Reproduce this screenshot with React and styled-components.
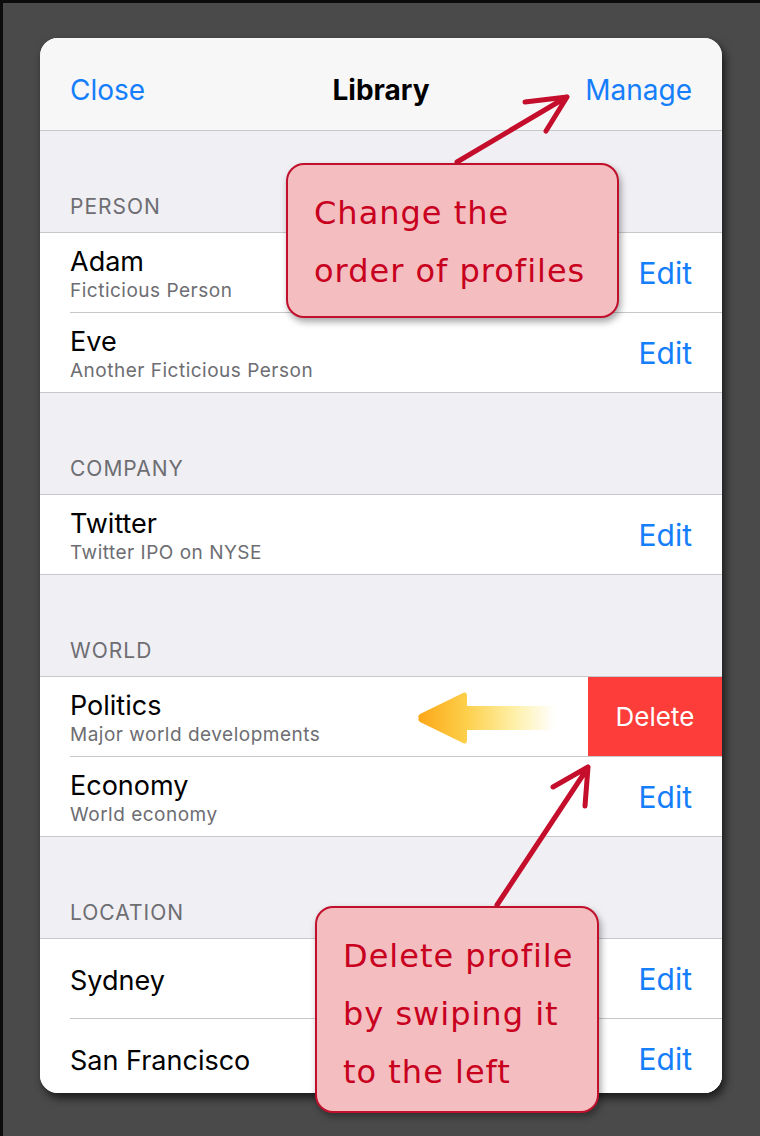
import React from 'react';
import styled, { createGlobalStyle } from 'styled-components';

const GlobalStyle = createGlobalStyle`
	html, body {
		margin: 0;
		padding: 0;
		background: #4a4a4a;
	}
	* {
		box-sizing: border-box;
	}
`;

const sections = [
	{
		title: 'PERSON',
		items: [
			{ name: 'Adam', sub: 'Ficticious Person' },
			{ name: 'Eve', sub: 'Another Ficticious Person' },
		],
	},
	{
		title: 'COMPANY',
		items: [{ name: 'Twitter', sub: 'Twitter IPO on NYSE' }],
	},
	{
		title: 'WORLD',
		items: [
			{ name: 'Politics', sub: 'Major world developments', swiped: true },
			{ name: 'Economy', sub: 'World economy' },
		],
	},
	{
		title: 'LOCATION',
		items: [{ name: 'Sydney' }, { name: 'San Francisco' }],
	},
];

export default function App() {
	return (
		<Page>
			<GlobalStyle />
			<Card>
				<NavBar>
					<NavButton>Close</NavButton>
					<NavTitle>Library</NavTitle>
					<NavButton align="right">Manage</NavButton>
				</NavBar>
				{sections.map((section) => (
					<section key={section.title}>
						<SectionHeader>{section.title}</SectionHeader>
						<Group>
							{section.items.map((item) => (
								<Row key={item.name}>
									<TextBlock>
										<Title>{item.name}</Title>
										{item.sub && <Subtitle>{item.sub}</Subtitle>}
									</TextBlock>
									{item.swiped ? (
										<>
											<SwipeArrow />
											<DeleteButton>Delete</DeleteButton>
										</>
									) : (
										<EditButton>Edit</EditButton>
									)}
								</Row>
							))}
						</Group>
					</section>
				))}
			</Card>

			{/* annotations drawn over the screenshot */}
			<Arrows viewBox="0 0 760 1136">
				<g stroke="#c40e2c" strokeWidth="5" strokeLinecap="round" fill="none">
					<path d="M457 162 L565 98 M567 97 L525 102 M567 97 L546 131" />
					<path d="M497 905 L587 769 M588 767 L553 787 M588 767 L585 806" />
				</g>
			</Arrows>
			<Callout top={163} left={286} width={333} height={155}>
				Change the
				<br />
				order of profiles
			</Callout>
			<Callout top={906} left={315} width={284} height={207}>
				Delete profile
				<br />
				by swiping it
				<br />
				to the left
			</Callout>
		</Page>
	);
}

function SwipeArrow() {
	return (
		<ArrowSvg width="138" height="52" viewBox="0 0 138 52">
			<defs>
				<linearGradient id="swipe" x1="0" y1="0" x2="1" y2="0">
					<stop offset="0" stopColor="#fba718" />
					<stop offset="0.35" stopColor="#fdcf4a" />
					<stop offset="0.7" stopColor="#fef0a8" />
					<stop offset="1" stopColor="#ffffff" />
				</linearGradient>
			</defs>
			<path
				d="M2 26 Q0 24.5 3 22 L46 1 Q50 -1 50 4 L50 14 L138 14 L138 38 L50 38 L50 48 Q50 53 46 51 L3 30 Q0 27.5 2 26 Z"
				fill="url(#swipe)"
			/>
		</ArrowSvg>
	);
}

const Page = styled.div`
	position: relative;
	width: 760px;
	height: 1136px;
	padding: 38px 38px 0 40px;
	background: #4a4a4a;
	box-shadow: inset 3px 3px 0 #0c0c0c;
	overflow: hidden;
	font-family: 'Inter', 'Liberation Sans', sans-serif;
`;

const Card = styled.div`
	width: 682px;
	height: 1055px;
	border-radius: 18px;
	overflow: hidden;
	background: #efeff4;
	box-shadow: 3px 5px 8px rgba(0, 0, 0, 0.65);
`;

const NavBar = styled.header`
	display: grid;
	grid-template-columns: 1fr auto 1fr;
	align-items: center;
	height: 93px;
	padding: 12px 30px 0;
	background: #f7f7f8;
	border-bottom: 1px solid #c8c7cc;
`;

const NavButton = styled.span`
	font-size: 28px;
	color: #157efb;
	text-align: ${(p) => (p.align === 'right' ? 'right' : 'left')};
`;

const NavTitle = styled.span`
	font-size: 28px;
	font-weight: 700;
	color: #000;
`;

const SectionHeader = styled.div`
	display: flex;
	align-items: flex-end;
	height: 101px;
	padding: 0 30px 12px;
	font-size: 21px;
	line-height: 26px;
	letter-spacing: 1px;
	color: #6d6d72;
`;

const Group = styled.div`
	background: #fff;
	border-top: 1px solid #c8c7cc;
	border-bottom: 1px solid #c8c7cc;
`;

const Row = styled.div`
	display: flex;
	align-items: center;
	height: 79px;
	margin-left: 30px;
	background: #fff;

	& + & {
		height: 80px;
		border-top: 1px solid #c8c7cc;
	}
`;

const TextBlock = styled.div`
	display: flex;
	flex-direction: column;
	gap: 3px;
	padding-top: 4px;
`;

const Title = styled.div`
	font-size: 27px;
	line-height: 30px;
	color: #000;
`;

const Subtitle = styled.div`
	font-size: 19px;
	line-height: 22px;
	letter-spacing: 0.5px;
	color: #6d6d72;
`;

const EditButton = styled.span`
	margin-left: auto;
	padding-right: 30px;
	font-size: 30px;
	color: #157efb;
`;

const ArrowSvg = styled.svg`
	margin-left: auto;
	margin-right: 33px;
	margin-top: 2px;
	flex-shrink: 0;
`;

const DeleteButton = styled.div`
	display: flex;
	align-items: center;
	justify-content: center;
	align-self: stretch;
	width: 134px;
	background: #fc3d39;
	color: #fff;
	font-size: 26px;
`;

const Arrows = styled.svg`
	position: absolute;
	inset: 0;
	width: 760px;
	height: 1136px;
	pointer-events: none;
`;

const Callout = styled.div`
	position: absolute;
	top: ${(p) => p.top}px;
	left: ${(p) => p.left}px;
	width: ${(p) => p.width}px;
	height: ${(p) => p.height}px;
	padding: 19px 0 0 26px;
	background: #f4bdbf;
	border: 2px solid #c0102c;
	border-radius: 18px;
	box-shadow: 2px 4px 7px rgba(0, 0, 0, 0.35);
	font-family: 'Comic Sans MS', 'DejaVu Sans', sans-serif;
	font-size: 32px;
	line-height: 58px;
	letter-spacing: 1px;
	color: #c8001e;
	white-space: nowrap;
`;
